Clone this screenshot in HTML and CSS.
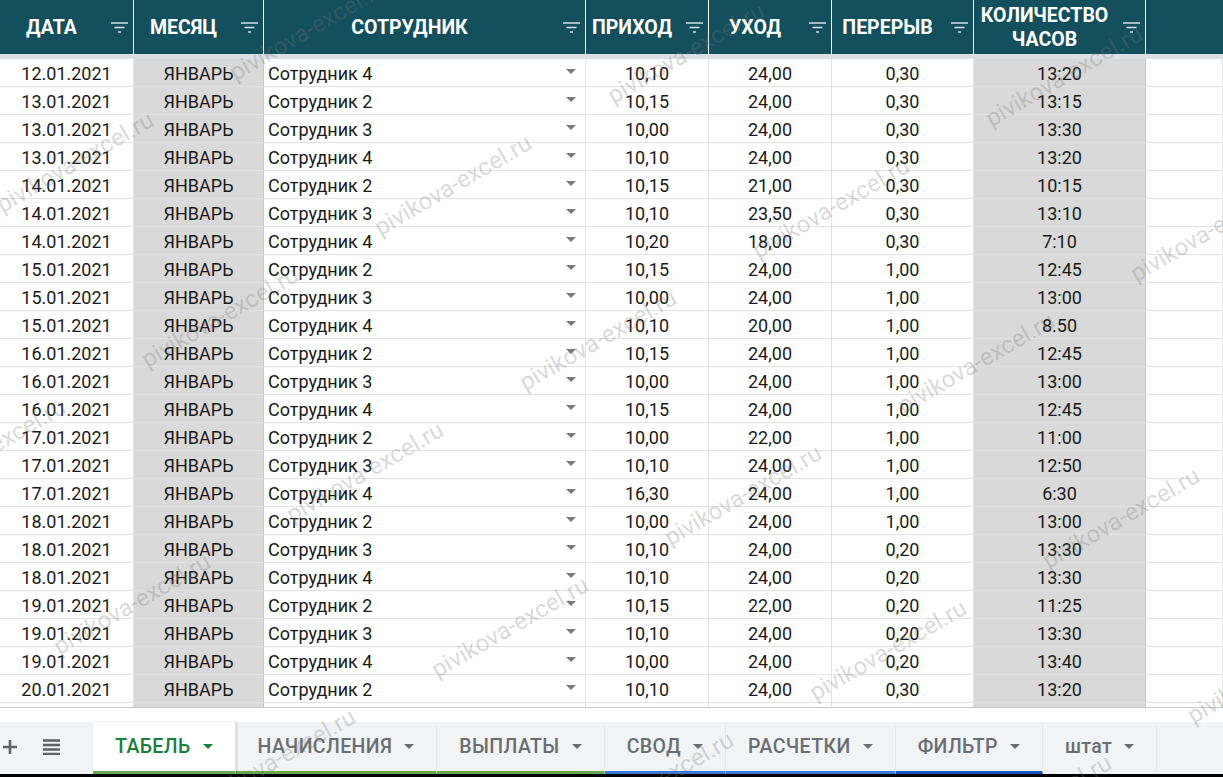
FILE: index.html
```html
<!DOCTYPE html>
<html lang="ru">
<head>
<meta charset="utf-8">
<title>Табель</title>
<link rel="stylesheet" href="styles.css">
</head>
<body>
<div class="app">
  <div class="sheet">
    <div class="row head">
      <div class="hc"><span class="hl">ДАТА</span><svg class="flt" viewBox="0 0 17 11"><path d="M0 1h17M3.5 5.5h10M7 10h3"/></svg></div>
      <div class="hc"><span class="hl">МЕСЯЦ</span><svg class="flt" viewBox="0 0 17 11"><path d="M0 1h17M3.5 5.5h10M7 10h3"/></svg></div>
      <div class="hc"><span class="hl">СОТРУДНИК</span><svg class="flt" viewBox="0 0 17 11"><path d="M0 1h17M3.5 5.5h10M7 10h3"/></svg></div>
      <div class="hc"><span class="hl">ПРИХОД</span><svg class="flt" viewBox="0 0 17 11"><path d="M0 1h17M3.5 5.5h10M7 10h3"/></svg></div>
      <div class="hc"><span class="hl">УХОД</span><svg class="flt" viewBox="0 0 17 11"><path d="M0 1h17M3.5 5.5h10M7 10h3"/></svg></div>
      <div class="hc"><span class="hl">ПЕРЕРЫВ</span><svg class="flt" viewBox="0 0 17 11"><path d="M0 1h17M3.5 5.5h10M7 10h3"/></svg></div>
      <div class="hc"><span class="hl two">КОЛИЧЕСТВО<br>ЧАСОВ</span><svg class="flt" viewBox="0 0 17 11"><path d="M0 1h17M3.5 5.5h10M7 10h3"/></svg></div>
      <div class="hc"></div>
    </div>
    <div class="freeze"></div>

    <div class="row"><div class="c">12.01.2021</div><div class="c g">ЯНВАРЬ</div><div class="c emp"><span>Сотрудник 4</span><i class="dd"></i></div><div class="c">10,10</div><div class="c">24,00</div><div class="c">0,30</div><div class="c g">13:20</div><div class="c"></div></div>
    <div class="row"><div class="c">13.01.2021</div><div class="c g">ЯНВАРЬ</div><div class="c emp"><span>Сотрудник 2</span><i class="dd"></i></div><div class="c">10,15</div><div class="c">24,00</div><div class="c">0,30</div><div class="c g">13:15</div><div class="c"></div></div>
    <div class="row"><div class="c">13.01.2021</div><div class="c g">ЯНВАРЬ</div><div class="c emp"><span>Сотрудник 3</span><i class="dd"></i></div><div class="c">10,00</div><div class="c">24,00</div><div class="c">0,30</div><div class="c g">13:30</div><div class="c"></div></div>
    <div class="row"><div class="c">13.01.2021</div><div class="c g">ЯНВАРЬ</div><div class="c emp"><span>Сотрудник 4</span><i class="dd"></i></div><div class="c">10,10</div><div class="c">24,00</div><div class="c">0,30</div><div class="c g">13:20</div><div class="c"></div></div>
    <div class="row"><div class="c">14.01.2021</div><div class="c g">ЯНВАРЬ</div><div class="c emp"><span>Сотрудник 2</span><i class="dd"></i></div><div class="c">10,15</div><div class="c">21,00</div><div class="c">0,30</div><div class="c g">10:15</div><div class="c"></div></div>
    <div class="row"><div class="c">14.01.2021</div><div class="c g">ЯНВАРЬ</div><div class="c emp"><span>Сотрудник 3</span><i class="dd"></i></div><div class="c">10,10</div><div class="c">23,50</div><div class="c">0,30</div><div class="c g">13:10</div><div class="c"></div></div>
    <div class="row"><div class="c">14.01.2021</div><div class="c g">ЯНВАРЬ</div><div class="c emp"><span>Сотрудник 4</span><i class="dd"></i></div><div class="c">10,20</div><div class="c">18,00</div><div class="c">0,30</div><div class="c g">7:10</div><div class="c"></div></div>
    <div class="row"><div class="c">15.01.2021</div><div class="c g">ЯНВАРЬ</div><div class="c emp"><span>Сотрудник 2</span><i class="dd"></i></div><div class="c">10,15</div><div class="c">24,00</div><div class="c">1,00</div><div class="c g">12:45</div><div class="c"></div></div>
    <div class="row"><div class="c">15.01.2021</div><div class="c g">ЯНВАРЬ</div><div class="c emp"><span>Сотрудник 3</span><i class="dd"></i></div><div class="c">10,00</div><div class="c">24,00</div><div class="c">1,00</div><div class="c g">13:00</div><div class="c"></div></div>
    <div class="row"><div class="c">15.01.2021</div><div class="c g">ЯНВАРЬ</div><div class="c emp"><span>Сотрудник 4</span><i class="dd"></i></div><div class="c">10,10</div><div class="c">20,00</div><div class="c">1,00</div><div class="c g">8.50</div><div class="c"></div></div>
    <div class="row"><div class="c">16.01.2021</div><div class="c g">ЯНВАРЬ</div><div class="c emp"><span>Сотрудник 2</span><i class="dd"></i></div><div class="c">10,15</div><div class="c">24,00</div><div class="c">1,00</div><div class="c g">12:45</div><div class="c"></div></div>
    <div class="row"><div class="c">16.01.2021</div><div class="c g">ЯНВАРЬ</div><div class="c emp"><span>Сотрудник 3</span><i class="dd"></i></div><div class="c">10,00</div><div class="c">24,00</div><div class="c">1,00</div><div class="c g">13:00</div><div class="c"></div></div>
    <div class="row"><div class="c">16.01.2021</div><div class="c g">ЯНВАРЬ</div><div class="c emp"><span>Сотрудник 4</span><i class="dd"></i></div><div class="c">10,15</div><div class="c">24,00</div><div class="c">1,00</div><div class="c g">12:45</div><div class="c"></div></div>
    <div class="row"><div class="c">17.01.2021</div><div class="c g">ЯНВАРЬ</div><div class="c emp"><span>Сотрудник 2</span><i class="dd"></i></div><div class="c">10,00</div><div class="c">22,00</div><div class="c">1,00</div><div class="c g">11:00</div><div class="c"></div></div>
    <div class="row"><div class="c">17.01.2021</div><div class="c g">ЯНВАРЬ</div><div class="c emp"><span>Сотрудник 3</span><i class="dd"></i></div><div class="c">10,10</div><div class="c">24,00</div><div class="c">1,00</div><div class="c g">12:50</div><div class="c"></div></div>
    <div class="row"><div class="c">17.01.2021</div><div class="c g">ЯНВАРЬ</div><div class="c emp"><span>Сотрудник 4</span><i class="dd"></i></div><div class="c">16,30</div><div class="c">24,00</div><div class="c">1,00</div><div class="c g">6:30</div><div class="c"></div></div>
    <div class="row"><div class="c">18.01.2021</div><div class="c g">ЯНВАРЬ</div><div class="c emp"><span>Сотрудник 2</span><i class="dd"></i></div><div class="c">10,00</div><div class="c">24,00</div><div class="c">1,00</div><div class="c g">13:00</div><div class="c"></div></div>
    <div class="row"><div class="c">18.01.2021</div><div class="c g">ЯНВАРЬ</div><div class="c emp"><span>Сотрудник 3</span><i class="dd"></i></div><div class="c">10,10</div><div class="c">24,00</div><div class="c">0,20</div><div class="c g">13:30</div><div class="c"></div></div>
    <div class="row"><div class="c">18.01.2021</div><div class="c g">ЯНВАРЬ</div><div class="c emp"><span>Сотрудник 4</span><i class="dd"></i></div><div class="c">10,10</div><div class="c">24,00</div><div class="c">0,20</div><div class="c g">13:30</div><div class="c"></div></div>
    <div class="row"><div class="c">19.01.2021</div><div class="c g">ЯНВАРЬ</div><div class="c emp"><span>Сотрудник 2</span><i class="dd"></i></div><div class="c">10,15</div><div class="c">22,00</div><div class="c">0,20</div><div class="c g">11:25</div><div class="c"></div></div>
    <div class="row"><div class="c">19.01.2021</div><div class="c g">ЯНВАРЬ</div><div class="c emp"><span>Сотрудник 3</span><i class="dd"></i></div><div class="c">10,10</div><div class="c">24,00</div><div class="c">0,20</div><div class="c g">13:30</div><div class="c"></div></div>
    <div class="row"><div class="c">19.01.2021</div><div class="c g">ЯНВАРЬ</div><div class="c emp"><span>Сотрудник 4</span><i class="dd"></i></div><div class="c">10,00</div><div class="c">24,00</div><div class="c">0,20</div><div class="c g">13:40</div><div class="c"></div></div>
    <div class="row"><div class="c">20.01.2021</div><div class="c g">ЯНВАРЬ</div><div class="c emp"><span>Сотрудник 2</span><i class="dd"></i></div><div class="c">10,10</div><div class="c">24,00</div><div class="c">0,30</div><div class="c g">13:20</div><div class="c"></div></div>
    <div class="row part"><div class="c"></div><div class="c g"></div><div class="c"></div><div class="c"></div><div class="c"></div><div class="c"></div><div class="c g"></div><div class="c"></div></div>
  </div>
  <div class="hline"></div>
  <div class="space"></div>

  <div class="tabbar">
    <div class="tools">
      <svg class="plus" viewBox="0 0 14 14"><path d="M7 0v14M0 7h14"/></svg>
      <svg class="list" viewBox="0 0 17 16"><path d="M0 1.5h17M0 6h17M0 10.5h17M0 15h17"/></svg>
    </div>
    <div class="tab active green">ТАБЕЛЬ<i class="caret"></i></div>
    <div class="tab green">НАЧИСЛЕНИЯ<i class="caret"></i></div>
    <div class="tab green">ВЫПЛАТЫ<i class="caret"></i></div>
    <div class="tab blue">СВОД<i class="caret"></i></div>
    <div class="tab blue">РАСЧЕТКИ<i class="caret"></i></div>
    <div class="tab dblue">ФИЛЬТР<i class="caret"></i></div>
    <div class="tab">штат<i class="caret"></i></div>
  </div>
  <div class="bottom"></div>

  <div class="wms">
    <span class="wm" style="left:1297px;top:-56px">pivikova-excel.ru</span>
    <span class="wm" style="left:-70px;top:7px">pivikova-excel.ru</span>
    <span class="wm" style="left:308px;top:30px">pivikova-excel.ru</span>
    <span class="wm" style="left:686px;top:53px">pivikova-excel.ru</span>
    <span class="wm" style="left:1064px;top:76px">pivikova-excel.ru</span>
    <span class="wm" style="left:75px;top:162px">pivikova-excel.ru</span>
    <span class="wm" style="left:453px;top:185px">pivikova-excel.ru</span>
    <span class="wm" style="left:831px;top:208px">pivikova-excel.ru</span>
    <span class="wm" style="left:1209px;top:231px">pivikova-excel.ru</span>
    <span class="wm" style="left:220px;top:317px">pivikova-excel.ru</span>
    <span class="wm" style="left:598px;top:340px">pivikova-excel.ru</span>
    <span class="wm" style="left:976px;top:363px">pivikova-excel.ru</span>
    <span class="wm" style="left:-13px;top:449px">pivikova-excel.ru</span>
    <span class="wm" style="left:365px;top:472px">pivikova-excel.ru</span>
    <span class="wm" style="left:743px;top:495px">pivikova-excel.ru</span>
    <span class="wm" style="left:1121px;top:518px">pivikova-excel.ru</span>
    <span class="wm" style="left:132px;top:604px">pivikova-excel.ru</span>
    <span class="wm" style="left:510px;top:627px">pivikova-excel.ru</span>
    <span class="wm" style="left:888px;top:650px">pivikova-excel.ru</span>
    <span class="wm" style="left:1266px;top:673px">pivikova-excel.ru</span>
    <span class="wm" style="left:277px;top:759px">pivikova-excel.ru</span>
    <span class="wm" style="left:655px;top:782px">pivikova-excel.ru</span>
    <span class="wm" style="left:1033px;top:805px">pivikova-excel.ru</span>
  </div>
</div>
</body>
</html>
```

FILE: styles.css
```css
html, body {
  margin: 0;
  padding: 0;
  width: 1223px;
  height: 777px;
  overflow: hidden;
  background: #fff;
}

.app {
  position: relative;
  width: 1223px;
  height: 777px;
  display: flex;
  flex-direction: column;
  overflow: hidden;
  font-family: Roboto, "Noto Sans", "Liberation Sans", sans-serif;
}

.sheet {
  display: flex;
  flex-direction: column;
}

.row {
  display: grid;
  grid-template-columns: 134px 130px 322px 123px 123px 142px 172px 1fr;
  height: 28px;
}

.row.head {
  height: 54px;
  background: #134f5c;
}

.hc {
  box-sizing: border-box;
  border-right: 1px solid #ffffff;
  display: flex;
  align-items: center;
  color: #ffffff;
  font-weight: 700;
  font-size: 19.5px;
}

.hc:last-child {
  border-right: none;
}

.hl {
  flex: 1;
  text-align: center;
  padding-right: 8px;
  white-space: nowrap;
}

.hl.two {
  line-height: 24px;
  padding-top: 1px;
}

.flt {
  width: 17px;
  height: 11px;
  margin-right: 5px;
  flex: none;
  fill: none;
  stroke: #d4e0e3;
  stroke-width: 1.3;
}

.freeze {
  height: 5px;
  background: #dbe0e7;
}

.c {
  box-sizing: border-box;
  border-right: 1px solid #e2e2e2;
  border-bottom: 1px solid #e2e2e2;
  display: flex;
  align-items: center;
  justify-content: center;
  padding-top: 2px;
  font-size: 18px;
  color: #1a1a1a;
  white-space: nowrap;
}

.c.g {
  background: #d9d9d9;
  border-right-color: #c6c6c6;
}

.c.emp {
  justify-content: flex-start;
  padding-left: 4px;
}

.dd {
  margin-left: auto;
  margin-right: 9px;
  width: 0;
  height: 0;
  border-left: 5px solid transparent;
  border-right: 5px solid transparent;
  border-top: 5px solid #7a7a7a;
  margin-top: -5px;
}

.row.part {
  height: 4px;
}

.row.part .c {
  border-bottom: none;
  padding: 0;
}

.hline {
  height: 1px;
  background: #c9c9c9;
}

.space {
  flex: 1;
}

.tabbar {
  height: 52px;
  background: #f1f3f4;
  display: flex;
  align-items: stretch;
}

.tools {
  width: 93px;
  display: flex;
  align-items: center;
  padding-left: 3px;
  box-sizing: border-box;
  border-bottom: 3px solid #f1f3f4;
}

.plus {
  width: 14px;
  height: 14px;
  fill: none;
  stroke: #5f6368;
  stroke-width: 2.6;
}

.list {
  width: 17px;
  height: 16px;
  margin-left: 26px;
  fill: none;
  stroke: #5f6368;
  stroke-width: 2.4;
}

.tab {
  box-sizing: border-box;
  display: flex;
  align-items: center;
  gap: 12px;
  padding: 0 22px;
  font-size: 19.5px;
  font-weight: 500;
  letter-spacing: 0.4px;
  color: #6a6e72;
  border-right: 1px solid #e4e6e8;
  border-bottom: 3px solid #f1f3f4;
  white-space: nowrap;
}

.tab.active {
  background: #ffffff;
  color: #188038;
  box-shadow: 1px 0 2px rgba(0, 0, 0, 0.18);
  position: relative;
}

.tab.green {
  border-bottom-color: #6aa84f;
}

.tab.blue {
  border-bottom-color: #3c78d8;
}

.tab.dblue {
  border-bottom-color: #1a52c0;
}

.caret {
  width: 0;
  height: 0;
  border-left: 5px solid transparent;
  border-right: 5px solid transparent;
  border-top: 5px solid currentColor;
}

.bottom {
  height: 3px;
  background: #000;
}

.wms {
  position: absolute;
  inset: 0;
  pointer-events: none;
  overflow: hidden;
}

.wm {
  position: absolute;
  transform: translate(-50%, -50%) rotate(-30deg);
  font-family: Roboto, "Noto Sans", sans-serif;
  font-size: 24px;
  font-weight: 400;
  white-space: nowrap;
  color: rgba(120, 120, 120, 0.28);
}
```
